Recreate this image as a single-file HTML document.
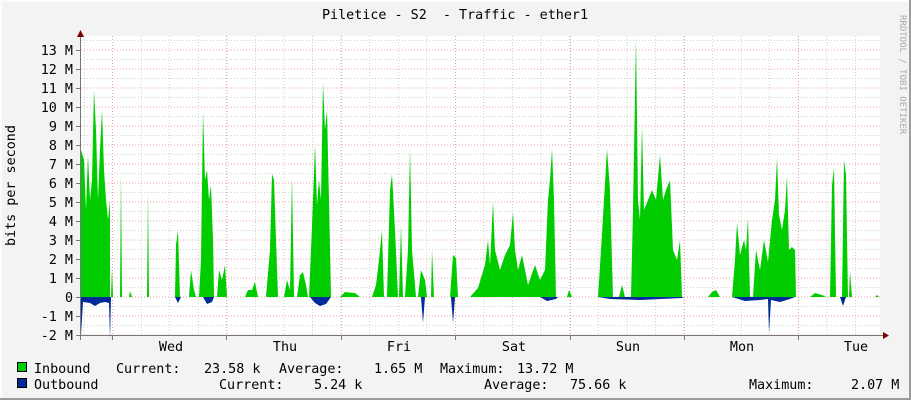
<!DOCTYPE html>
<html><head><meta charset="utf-8"><style>
html,body{margin:0;padding:0;background:#f3f3f3}
svg{display:block}
text{font-family:"DejaVu Sans Mono","Liberation Mono",monospace;font-size:13.4px;fill:#000}
</style></head><body>
<svg width="911" height="400" xmlns="http://www.w3.org/2000/svg">
<defs>
<pattern id="gv" x="83.5" y="0" width="28.57" height="400" patternUnits="userSpaceOnUse">
<line x1="0.5" y1="0" x2="0.5" y2="400" stroke="#d0d0d0" stroke-dasharray="1,2"/></pattern>
<pattern id="gh" x="0" y="40" width="900" height="19" patternUnits="userSpaceOnUse">
<line x1="0" y1="0.5" x2="900" y2="0.5" stroke="#d0d0d0" stroke-dasharray="1,2"/>
<line x1="0" y1="10" x2="900" y2="10" stroke="#e8a0a0" stroke-dasharray="1,2"/></pattern>
</defs>
<rect x="0" y="0" width="911" height="400" fill="#f3f3f3"/>
<rect x="0" y="0" width="911" height="2" fill="#fcfcfc"/>
<rect x="0" y="0" width="2" height="400" fill="#fcfcfc"/>
<rect x="909" y="0" width="2" height="400" fill="#9c9c9c"/>
<rect x="0" y="398" width="911" height="2" fill="#9c9c9c"/>
<rect x="81" y="36" width="799" height="300" fill="#fff"/>
<rect x="81" y="36" width="799" height="300" fill="url(#gv)"/>
<rect x="81" y="36" width="799" height="300" fill="url(#gh)"/>
<g stroke="#f0a0a0" stroke-dasharray="1,2">
<line x1="112.5" y1="36" x2="112.5" y2="336"/><line x1="226.5" y1="36" x2="226.5" y2="336"/>
<line x1="341.5" y1="36" x2="341.5" y2="336"/><line x1="455.5" y1="36" x2="455.5" y2="336"/>
<line x1="570.5" y1="36" x2="570.5" y2="336"/><line x1="684.5" y1="36" x2="684.5" y2="336"/>
<line x1="798.5" y1="36" x2="798.5" y2="336"/></g>
<path fill="#00cc00" d="M81,297 L81,150 L84,160 L86,210 L88,155 L90,200 L92,180 L94,90 L96,130 L98,200 L100,150 L102,110 L104,170 L106,200 L108,220 L110,200 L110,297 Z
M111,297 L112,268 L113,297 Z M120,297 L121,174 L122,297 Z M129,297 L130,291 L132,297 Z M147,297 L148,193 L149,297 Z
M175,297 L176,245 L178,230 L180,297 Z M189,297 L191,270 L194,290 L196,297 Z
M199,297 L201,260 L203,111 L205,180 L207,170 L209,200 L211,185 L213,240 L214,297 Z
M217,297 L219,270 L222,280 L225,265 L227,297 Z M245,297 L248,290 L252,290 L255,282 L258,297 Z
M266,297 L270,250 L272,174 L274,180 L276,240 L278,297 Z M284,297 L287,280 L290,290 L292,177 L294,297 Z
M297,297 L300,275 L303,272 L306,285 L308,297 Z
M309,297 L311,250 L313,200 L315,145 L317,205 L319,180 L321,200 L323,82 L325,130 L327,110 L329,200 L331,297 Z
M340,297 L345,292 L355,293 L360,297 Z M372,297 L376,285 L379,260 L382,230 L384,297 Z
M387,297 L390,190 L392,174 L395,230 L398,297 Z M399,297 L401,225 L403,297 Z
M405,297 L408,250 L410,149 L412,250 L416,297 Z M418,297 L421,270 L425,280 L427,297 Z M431,297 L432,250 L434,297 Z
M450,297 L453,255 L456,258 L458,297 Z
M470,297 L478,288 L485,265 L488,240 L490,265 L493,202 L495,250 L500,270 L505,255 L510,245 L513,212 L515,250 L518,270 L522,255 L528,285 L535,265 L540,280 L545,270 L548,200 L550,180 L552,149 L554,200 L556,297 Z
M567,297 L569,290 L572,297 Z
M598,297 L601,250 L604,200 L607,149 L610,190 L613,297 Z M619,297 L622,285 L625,297 Z
M631,297 L633,210 L636,37 L638,200 L640,220 L642,126 L644,210 L648,200 L652,190 L656,200 L660,155 L663,200 L666,190 L670,180 L673,250 L677,260 L680,240 L682,297 Z
M708,297 L712,292 L716,290 L720,297 Z
M732,297 L735,260 L737,223 L740,255 L744,240 L746,250 L748,218 L750,297 Z
M753,297 L756,250 L760,270 L764,240 L768,262 L772,220 L775,200 L777,158 L779,215 L782,230 L785,210 L787,176 L789,250 L792,247 L795,250 L796,297 Z
M810,297 L815,293 L822,295 L826,297 Z M830,297 L832,185 L834,168 L836,297 Z
M842,297 L844,160 L846,175 L848,297 Z M849,297 L850,271 L852,297 Z M875,297 L877,295 L879,297 Z"/>
<path fill="#002a97" d="M81,297 L81,335 L83,302 L90,303 L95,306 L100,303 L105,302 L109,303 L110,339 L111,297 Z
M175,297 L178,303 L181,297 Z M203,297 L207,304 L212,302 L214,297 Z M310,297 L315,303 L320,306 L326,304 L331,297 Z
M421,297 L423,323 L425,297 Z M451,297 L453,323 L455,297 Z M540,297 L547,301 L556,299 L558,297 Z
M598,297 L610,299 L640,300 L682,298 L684,297 Z M732,297 L745,301 L760,300 L768,299 L769,333 L771,300 L780,302 L790,299 L795,297 Z
M840,297 L843,306 L846,297 Z"/>
<line x1="80.5" y1="32" x2="80.5" y2="340" stroke="#777"/>
<line x1="76" y1="335.5" x2="884" y2="335.5" stroke="#777"/>
<g stroke="#777">
<line x1="76" y1="50.5" x2="80" y2="50.5"/><line x1="76" y1="69.5" x2="80" y2="69.5"/><line x1="76" y1="88.5" x2="80" y2="88.5"/><line x1="76" y1="107.5" x2="80" y2="107.5"/><line x1="76" y1="126.5" x2="80" y2="126.5"/><line x1="76" y1="145.5" x2="80" y2="145.5"/><line x1="76" y1="164.5" x2="80" y2="164.5"/><line x1="76" y1="183.5" x2="80" y2="183.5"/><line x1="76" y1="202.5" x2="80" y2="202.5"/><line x1="76" y1="221.5" x2="80" y2="221.5"/><line x1="76" y1="240.5" x2="80" y2="240.5"/><line x1="76" y1="259.5" x2="80" y2="259.5"/><line x1="76" y1="278.5" x2="80" y2="278.5"/><line x1="76" y1="297.5" x2="80" y2="297.5"/><line x1="76" y1="316.5" x2="80" y2="316.5"/>
<line x1="112.5" y1="336" x2="112.5" y2="340"/><line x1="226.5" y1="336" x2="226.5" y2="340"/><line x1="341.5" y1="336" x2="341.5" y2="340"/><line x1="455.5" y1="336" x2="455.5" y2="340"/><line x1="570.5" y1="336" x2="570.5" y2="340"/><line x1="684.5" y1="336" x2="684.5" y2="340"/><line x1="798.5" y1="336" x2="798.5" y2="340"/></g>
<polygon points="77,37 84,37 80.5,30" fill="#800000"/>
<polygon points="883,332 883,339 889,335.5" fill="#800000"/>
<text x="455" y="19" text-anchor="middle" xml:space="preserve">Piletice - S2  - Traffic - ether1</text>
<text transform="translate(900,15) rotate(90)" style="font-size:9px;fill:#aaa">RRDTOOL / TOBI OETIKER</text>
<text transform="translate(15,246) rotate(-90)">bits per second</text>
<g text-anchor="end">
<text x="73" y="55">13 M</text><text x="73" y="74">12 M</text><text x="73" y="93">11 M</text><text x="73" y="112">10 M</text><text x="73" y="131">9 M</text><text x="73" y="150">8 M</text><text x="73" y="169">7 M</text><text x="73" y="188">6 M</text><text x="73" y="207">5 M</text><text x="73" y="226">4 M</text><text x="73" y="245">3 M</text><text x="73" y="264">2 M</text><text x="73" y="283">1 M</text><text x="73" y="302">0</text><text x="73" y="321">-1 M</text><text x="73" y="340">-2 M</text></g>
<g text-anchor="middle">
<text x="171" y="351">Wed</text><text x="285" y="351">Thu</text><text x="399" y="351">Fri</text><text x="514" y="351">Sat</text><text x="628" y="351">Sun</text><text x="742" y="351">Mon</text><text x="856" y="351">Tue</text></g>
<rect x="17.5" y="362.5" width="9" height="9" fill="#00cc00" stroke="#000"/>
<rect x="17.5" y="378.5" width="9" height="9" fill="#002a97" stroke="#000"/>
<text x="34" y="373">Inbound</text><text x="116" y="373">Current:</text><text x="204" y="373">23.58 k</text>
<text x="279" y="373">Average:</text><text x="374" y="373">1.65 M</text><text x="440" y="373">Maximum:</text><text x="517" y="373">13.72 M</text>
<text x="34" y="389">Outbound</text><text x="219" y="389">Current:</text><text x="314" y="389">5.24 k</text>
<text x="484" y="389">Average:</text><text x="570" y="389">75.66 k</text><text x="749" y="389">Maximum:</text><text x="851" y="389">2.07 M</text>
</svg>
</body></html>
